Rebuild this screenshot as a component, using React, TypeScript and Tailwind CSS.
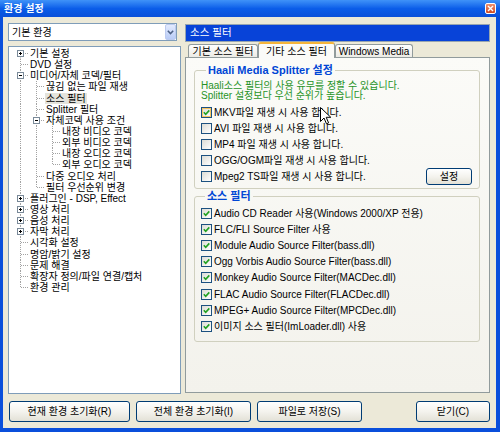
import React from 'react';

type TreeNode = { label: string; folder?: 'open' | 'closed'; selected?: boolean; children?: TreeNode[] };

const tree: TreeNode[] = [
  { label: '기본 설정', folder: 'closed' },
  { label: 'DVD 설정' },
  {
    label: '미디어/자체 코덱/필터',
    folder: 'open',
    children: [
      { label: '끊김 없는 파일 재생' },
      { label: '소스 필터', selected: true },
      { label: 'Splitter 필터' },
      {
        label: '자체코덱 사용 조건',
        folder: 'open',
        children: [
          { label: '내장 비디오 코덱' },
          { label: '외부 비디오 코덱' },
          { label: '내장 오디오 코덱' },
          { label: '외부 오디오 코덱' },
        ],
      },
      { label: '다중 오디오 처리' },
      { label: '필터 우선순위 변경' },
    ],
  },
  { label: '플러그인 - DSP, Effect', folder: 'closed' },
  { label: '영상 처리', folder: 'closed' },
  { label: '음성 처리', folder: 'closed' },
  { label: '자막 처리', folder: 'closed' },
  { label: '시각화 설정' },
  { label: '명암/밝기 설정' },
  { label: '문제 해결' },
  { label: '확장자 정의/파일 연결/캡처' },
  { label: '환경 관리' },
];

type Row = { node: TreeNode; ancestorsLast: boolean[]; isLast: boolean; first: boolean };

function flatten(nodes: TreeNode[], ancestorsLast: boolean[], out: Row[]) {
  nodes.forEach((n, i) => {
    const isLast = i === nodes.length - 1;
    out.push({ node: n, ancestorsLast, isLast, first: out.length === 0 });
    if (n.children && n.folder === 'open') flatten(n.children, [...ancestorsLast, isLast], out);
  });
}

const rows: Row[] = [];
flatten(tree, [], rows);

const RH = 11.15;
const dots = { stroke: '#a3a3a3', strokeDasharray: '1 1', strokeWidth: 1 };

function Guide({ line }: { line: boolean }) {
  return (
    <svg width="16" height={RH} className="shrink-0">
      {line && <line x1="8.5" y1="0" x2="8.5" y2={RH} {...dots} />}
    </svg>
  );
}

function Branch({ row }: { row: Row }) {
  const mid = 5.5;
  const f = row.node.folder;
  return (
    <svg width="16" height={RH} className="shrink-0">
      <line x1="8.5" y1={row.first ? mid : 0} x2="8.5" y2={row.isLast ? mid : RH} {...dots} />
      <line x1="9" y1={mid} x2="16" y2={mid} {...dots} />
      {f && (
        <>
          <rect x="5.5" y="2.5" width="6" height="6" fill="white" stroke="#7a8a99" />
          <line x1="7" y1={mid} x2="10" y2={mid} stroke="#000" />
          {f === 'closed' && <line x1="8.5" y1="4" x2="8.5" y2="7" stroke="#000" />}
        </>
      )}
    </svg>
  );
}

function Tree() {
  return (
    <div className="w-[173px] h-[348px] mt-[5px] border border-[#7f9db9] bg-white pt-[1px] pl-[3px] overflow-hidden">
      {rows.map((r, i) => (
        <div key={i} className="flex items-center h-[11.15px]">
          {r.ancestorsLast.map((last, d) => (
            <Guide key={d} line={!last} />
          ))}
          <Branch row={r} />
          <span
            className={
              'ml-[1px] px-[1px] leading-[11px] whitespace-nowrap ' + (r.node.selected ? 'bg-[#e4e3dc]' : '')
            }
          >
            {r.node.label}
          </span>
        </div>
      ))}
    </div>
  );
}

function Check({ checked, hover }: { checked?: boolean; hover?: boolean }) {
  return (
    <span
      className={
        'flex w-[11px] h-[11px] shrink-0 items-center justify-center border border-[#1c5180] bg-linear-to-br from-[#dcdcd5] to-white ' +
        (hover ? 'shadow-[inset_0_0_0_1px_#f8c560]' : '')
      }
    >
      {checked && (
        <svg width="9" height="9" viewBox="0 0 9 9">
          <path d="M1.8 4.3 L3.7 6.3 L7.3 2.4" stroke="#21a121" strokeWidth="1.6" fill="none" />
        </svg>
      )}
    </span>
  );
}

function CheckRow({ label, checked, hover, h = 'h-[16px]', children }: { label: string; checked?: boolean; hover?: boolean; h?: string; children?: React.ReactNode }) {
  return (
    <div className={'flex items-center gap-[2px] ' + h}>
      <Check checked={checked} hover={hover} />
      <span className="whitespace-nowrap">{label}</span>
      {children}
    </div>
  );
}

function XpButton({ className, children }: { className: string; children: React.ReactNode }) {
  return (
    <button className={'flex items-center justify-center rounded-[3px] border border-[#003c74] bg-linear-to-b from-white via-[#f4f3ee] to-[#e3e1d6] text-[10px] ' + className}>
      {children}
    </button>
  );
}

const sourceFilters = [
  'Audio CD Reader 사용(Windows 2000/XP 전용)',
  'FLC/FLI Source Filter 사용',
  'Module Audio Source Filter(bass.dll)',
  'Ogg Vorbis Audio Source Filter(bass.dll)',
  'Monkey Audio Source Filter(MACDec.dll)',
  'FLAC Audio Source Filter(FLACDec.dll)',
  'MPEG+ Audio Source Filter(MPCDec.dll)',
  '이미지 소스 필터(ImLoader.dll) 사용',
];

export default function App() {
  return (
    <div className="relative w-[500px] h-[432px] flex flex-col bg-[#0a4fdb] overflow-hidden text-[10px] text-black [font-family:Liberation_Sans,Noto_Sans_CJK_KR,sans-serif]">
      {/* title bar */}
      <div className="h-[17px] shrink-0 flex items-center justify-between pl-[4px] pr-[4px] bg-linear-to-b from-[#3f92f8] via-[#0b5de9] to-[#0a50d9]">
        <span className="text-white font-bold text-[10px] leading-[12px]">환경 설정</span>
        <span className="flex w-[11px] h-[11px] items-center justify-center rounded-[2px] border border-white bg-linear-to-b from-[#ee8e6c] to-[#d0491f]">
          <svg width="7" height="7" viewBox="0 0 7 7">
            <path d="M1 1 L6 6 M6 1 L1 6" stroke="white" strokeWidth="1.4" />
          </svg>
        </span>
      </div>

      {/* dialog body */}
      <div className="flex-1 ml-[3px] mr-[4px] mb-[4px] bg-[#ece9d8] flex flex-col pl-[5px] pr-[6px] pt-[6px]">
        <div className="flex items-start">
          <div className="w-[173px] flex flex-col">
            <div className="w-[169px] h-[18px] flex items-center border border-[#7f9db9] bg-white pl-[3px]">
              <span className="flex-1">기본 환경</span>
              <span className="flex w-[11px] h-[16px] items-center justify-center rounded-[2px] border border-[#bccbf0] bg-linear-to-b from-[#e3ebfe] to-[#b8cbf6]">
                <svg width="7" height="5" viewBox="0 0 7 5">
                  <path d="M0.8 0.8 L3.5 3.6 L6.2 0.8" stroke="#4d6185" strokeWidth="1.5" fill="none" />
                </svg>
              </span>
            </div>
            <Tree />
          </div>

          <div className="ml-[4px] w-[305px] mt-[1px] flex flex-col">
            <div className="h-[18px] flex items-center border border-[#97a5b0] bg-[#0843d8] pl-[4px] text-white text-[10.5px]">
              소스 필터
            </div>
            <div className="relative z-10 h-[15px] flex items-end pl-[3px]">
              <div className="w-[70px] h-[13px] flex items-center justify-center rounded-t-[3px] border border-b-0 border-[#919b9c] bg-linear-to-b from-white to-[#ecebe5]">
                기본 소스 필터
              </div>
              <div className="w-[77px] h-[16px] -mb-[1px] flex items-center justify-center rounded-t-[3px] border border-b-0 border-[#919b9c] border-t-2 border-t-[#f5b53a] bg-[#fbfbf8]">
                기타 소스 필터
              </div>
              <div className="w-[78px] h-[13px] flex items-center justify-center rounded-t-[3px] border border-b-0 border-[#919b9c] bg-linear-to-b from-white to-[#ecebe5]">
                Windows Media
              </div>
            </div>
            <div className="h-[336px] border border-[#919b9c] bg-linear-to-b from-[#fbfbf8] to-[#f3f2ec] pt-[6px] pl-[8px] pr-[9px]">
              <fieldset className="border border-[#d0d0bf] rounded-[3px] pl-[6px] pr-[7px] pb-[4px]">
                <legend className="ml-[5px] px-[2px] font-bold text-[11px] leading-[13px] text-[#0046d5]">
                  Haali Media Splitter 설정
                </legend>
                <div className="pt-[4px] leading-[10px] text-[#279327]">
                  <div>Haali소스 필터의 사용 유무를 정할 수 있습니다.</div>
                  <div>Splitter 설정보다 우선 순위가 높습니다.</div>
                </div>
                <div className="mt-[3px]">
                  <CheckRow label="MKV파일 재생 시 사용 합니다." checked hover />
                  <CheckRow label="AVI 파일 재생 시 사용 합니다." />
                  <CheckRow label="MP4 파일 재생 시 사용 합니다." />
                  <CheckRow label="OGG/OGM파일 재생 시 사용 합니다." />
                  <CheckRow label="Mpeg2 TS파일 재생 시 사용 합니다.">
                    <XpButton className="ml-auto w-[46px] h-[17px]">설정</XpButton>
                  </CheckRow>
                </div>
              </fieldset>

              <fieldset className="mt-[1px] border border-[#d0d0bf] rounded-[3px] pl-[6px] pr-[7px] pb-[6px]">
                <legend className="ml-[4px] px-[2px] font-bold text-[11px] leading-[13px] text-[#0046d5]">소스 필터</legend>
                <div className="pt-[2px]">
                  {sourceFilters.map((s) => (
                    <CheckRow key={s} label={s} checked h="h-[16.2px]" />
                  ))}
                </div>
              </fieldset>
            </div>
          </div>
        </div>

        <div className="mt-[7px] flex">
          <XpButton className="ml-[1px] w-[121px] h-[21px]">현재 환경 초기화(R)</XpButton>
          <XpButton className="ml-[6px] w-[115px] h-[21px]">전체 환경 초기화(I)</XpButton>
          <XpButton className="ml-[6px] w-[105px] h-[21px]">파일로 저장(S)</XpButton>
          <XpButton className="ml-auto w-[74px] h-[21px]">닫기(C)</XpButton>
        </div>
      </div>

      {/* mouse pointer */}
      <svg className="absolute left-[320px] top-[107px]" width="12" height="18" viewBox="0 0 12 18">
        <path d="M0.5 0.5 L0.5 14.5 L4 11 L6.5 16.8 L8.6 15.9 L6.2 10.3 L10.8 10.3 Z" fill="white" stroke="black" strokeWidth="1" />
      </svg>
    </div>
  );
}
